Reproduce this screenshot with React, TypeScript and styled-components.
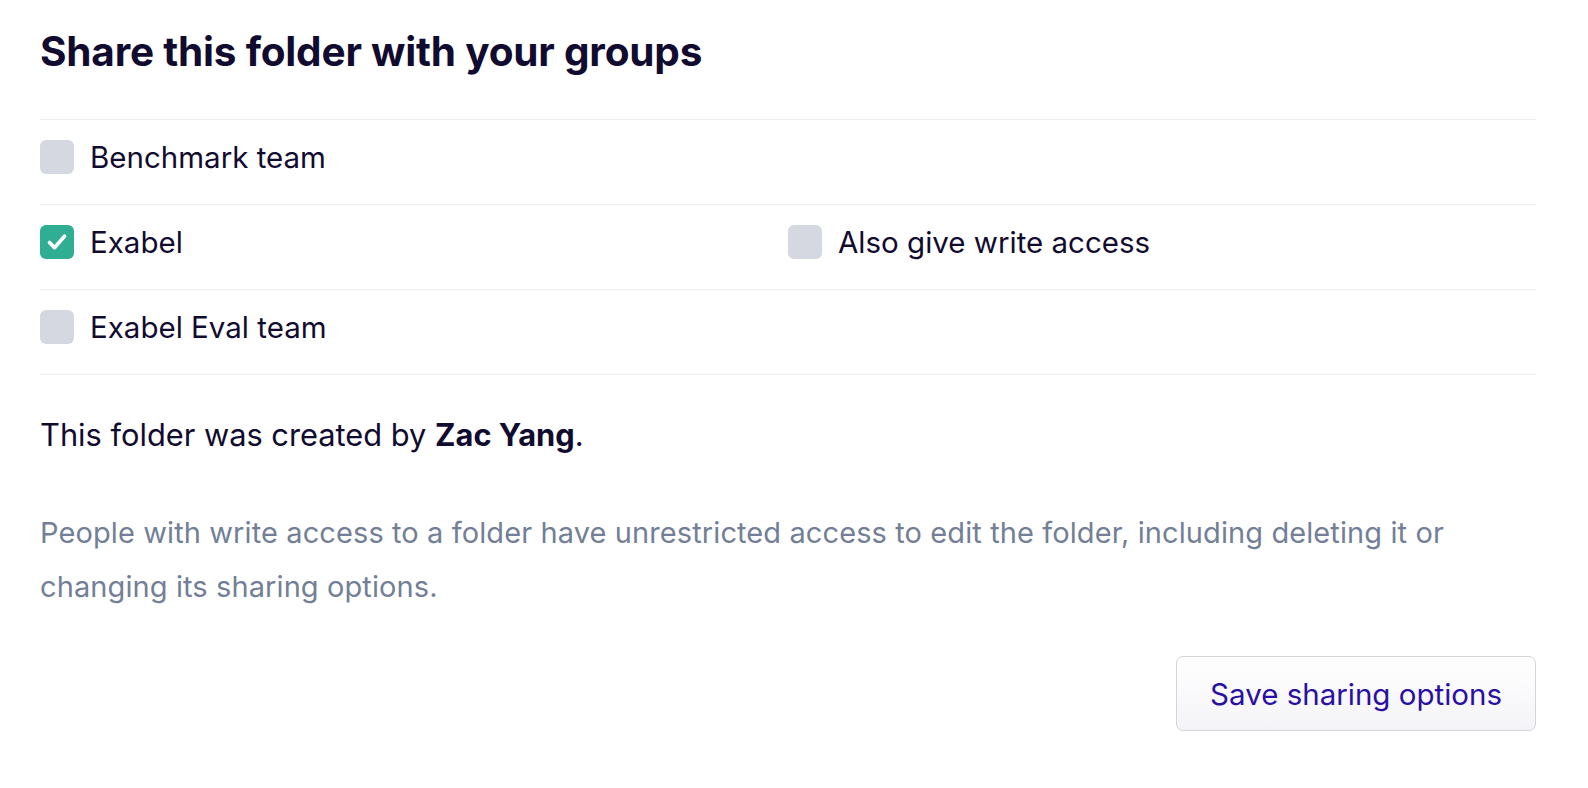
import styled, { createGlobalStyle } from "styled-components";

const GlobalStyle = createGlobalStyle`
  body {
    margin: 0;
    background: #ffffff;
    font-family: Inter, "Noto Sans", "Liberation Sans", sans-serif;
    color: #120b30;
  }
`;

type Group = { name: string; checked: boolean };

const groups: Group[] = [
  { name: "Benchmark team", checked: false },
  { name: "Exabel", checked: true },
  { name: "Exabel Eval team", checked: false },
];

function App() {
  return (
    <>
      <GlobalStyle />
      <Page>
        <Title>Share this folder with your groups</Title>
        <GroupList>
          {groups.map((g) => (
            <GroupRow key={g.name}>
              <Option>
                <Checkbox checked={g.checked} />
                <Label>{g.name}</Label>
              </Option>
              {g.checked && (
                <Option>
                  <Checkbox checked={false} />
                  <Label>Also give write access</Label>
                </Option>
              )}
            </GroupRow>
          ))}
        </GroupList>
        <Creator>
          This folder was created by <strong>Zac Yang</strong>.
        </Creator>
        <Note>
          People with write access to a folder have unrestricted access to edit the folder, including
          deleting it or changing its sharing options.
        </Note>
        <Footer>
          <SaveButton>Save sharing options</SaveButton>
        </Footer>
      </Page>
    </>
  );
}

function Checkbox({ checked }: { checked: boolean }) {
  return (
    <Box $checked={checked}>
      {checked && (
        <svg width="34" height="34" viewBox="0 0 34 34">
          <path
            d="M9.5 17.5l5 5.2 10-11.5"
            fill="none"
            stroke="#fff"
            strokeWidth="3.6"
            strokeLinecap="round"
            strokeLinejoin="round"
          />
        </svg>
      )}
    </Box>
  );
}

const Page = styled.div`
  padding: 28px 52px 40px 40px;
`;

const Title = styled.h2`
  margin: 0 0 43px;
  font-size: 40.5px;
  line-height: 48px;
  font-weight: 700;
  letter-spacing: -0.2px;
  color: #120b30;
`;

const GroupList = styled.div`
  border-top: 1px solid #ececf2;
`;

const GroupRow = styled.div`
  display: grid;
  grid-template-columns: 1fr 1fr;
  padding: 20px 0 30px;
  border-bottom: 1px solid #ececf2;
`;

const Option = styled.label`
  display: flex;
  align-items: center;
  gap: 16px;
`;

const Box = styled.span<{ $checked: boolean }>`
  width: 34px;
  height: 34px;
  flex: none;
  border-radius: 6px;
  background: ${(p) => (p.$checked ? "#2fae93" : "#d5d8e1")};
  display: flex;
  align-items: center;
  justify-content: center;
`;

const Label = styled.span`
  font-size: 29.5px;
  line-height: 34px;
  color: #120b30;
`;

const Creator = styled.p`
  margin: 40px 0 0;
  font-size: 30.8px;
  line-height: 40px;
  color: #120b30;

  strong {
    font-weight: 700;
  }
`;

const Note = styled.p`
  margin: 51px 0 0;
  font-size: 29px;
  line-height: 54px;
  letter-spacing: 0.1px;
  color: #737f97;
`;

const Footer = styled.div`
  display: flex;
  justify-content: flex-end;
  margin-top: 42px;
`;

const SaveButton = styled.button`
  height: 75px;
  padding: 0 33px;
  border: 1px solid #d4d4da;
  border-radius: 7px;
  background: linear-gradient(#ffffff, #f4f4f8);
  font-family: Inter, "Noto Sans", "Liberation Sans", sans-serif;
  font-size: 29.5px;
  color: #2a0fa3;
  cursor: pointer;
`;

export default App;
